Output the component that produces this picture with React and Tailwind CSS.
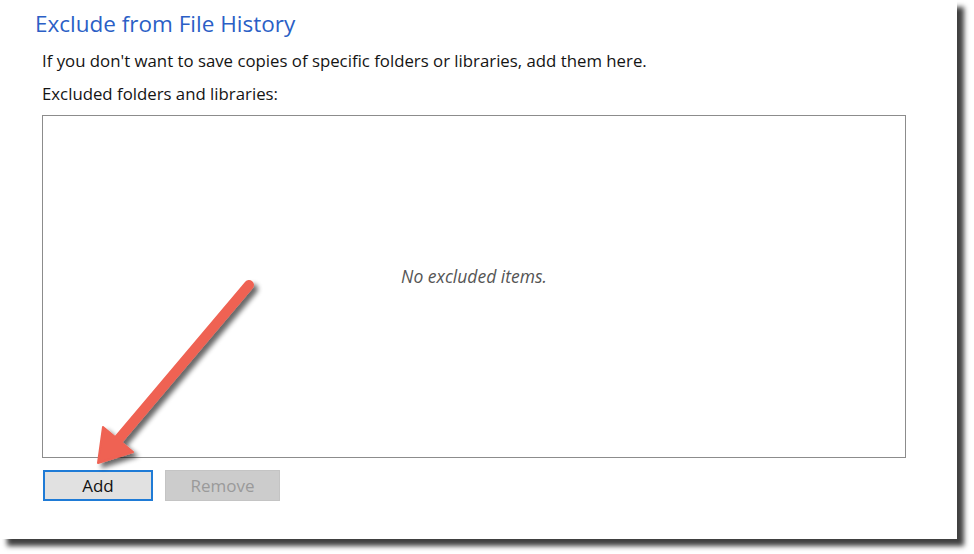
export default function App() {
  return (
    <div className="w-[974px] h-[554px] bg-white relative overflow-hidden" style={{ fontFamily: '"Open Sans", "Noto Sans", sans-serif' }}>
      <div className="w-[957px] h-[539px] bg-white shadow-[7px_7px_5px_rgba(0,0,0,0.75)] flex flex-col">
        <h1 className="ml-[35px] mt-[10px] text-[22.5px] leading-[28px] text-[#2b5fc6]">
          Exclude from File History
        </h1>
        <p className="ml-[42px] mt-[13px] text-[16.8px] leading-[20px] text-[#141414]">
          If you don't want to save copies of specific folders or libraries, add them here.
        </p>
        <p className="ml-[42px] mt-[13px] text-[16.8px] leading-[20px] text-[#141414]">
          Excluded folders and libraries:
        </p>
        <div className="ml-[42px] mt-[11px] w-[864px] h-[343px] border-[1.5px] border-[#8c8c8c] flex items-center justify-center">
          <span className="italic text-[17.5px] text-[#555] mt-[-20px]">No excluded items.</span>
        </div>
        <div className="ml-[43px] mt-[12px] flex gap-[12px]">
          <button className="w-[110px] h-[31px] bg-[#e1e1e1] border-2 border-[#1f7bd6] text-[17px] leading-[20px] text-[#111]">
            Add
          </button>
          <button className="w-[115px] h-[31px] bg-[#cccccc] border border-[#c4c4c4] text-[17px] leading-[20px] text-[#9a9a9a]">
            Remove
          </button>
        </div>
      </div>
      <svg className="absolute left-0 top-0 pointer-events-none" width="974" height="554" viewBox="0 0 974 554">
        <defs>
          <filter id="sh" x="-20%" y="-20%" width="140%" height="140%">
            <feGaussianBlur in="SourceAlpha" stdDeviation="2.5" />
            <feOffset dx="4" dy="4" result="b" />
            <feComponentTransfer>
              <feFuncA type="linear" slope="0.6" />
            </feComponentTransfer>
            <feMerge>
              <feMergeNode />
              <feMergeNode in="SourceGraphic" />
            </feMerge>
          </filter>
        </defs>
        <g filter="url(#sh)" fill="#ef6253" stroke="#ef6253">
          <line x1="249" y1="285" x2="118" y2="440" strokeWidth="10" strokeLinecap="round" />
          <polygon points="98,463 103,427 133,452" strokeWidth="2" strokeLinejoin="round" />
        </g>
      </svg>
    </div>
  );
}
